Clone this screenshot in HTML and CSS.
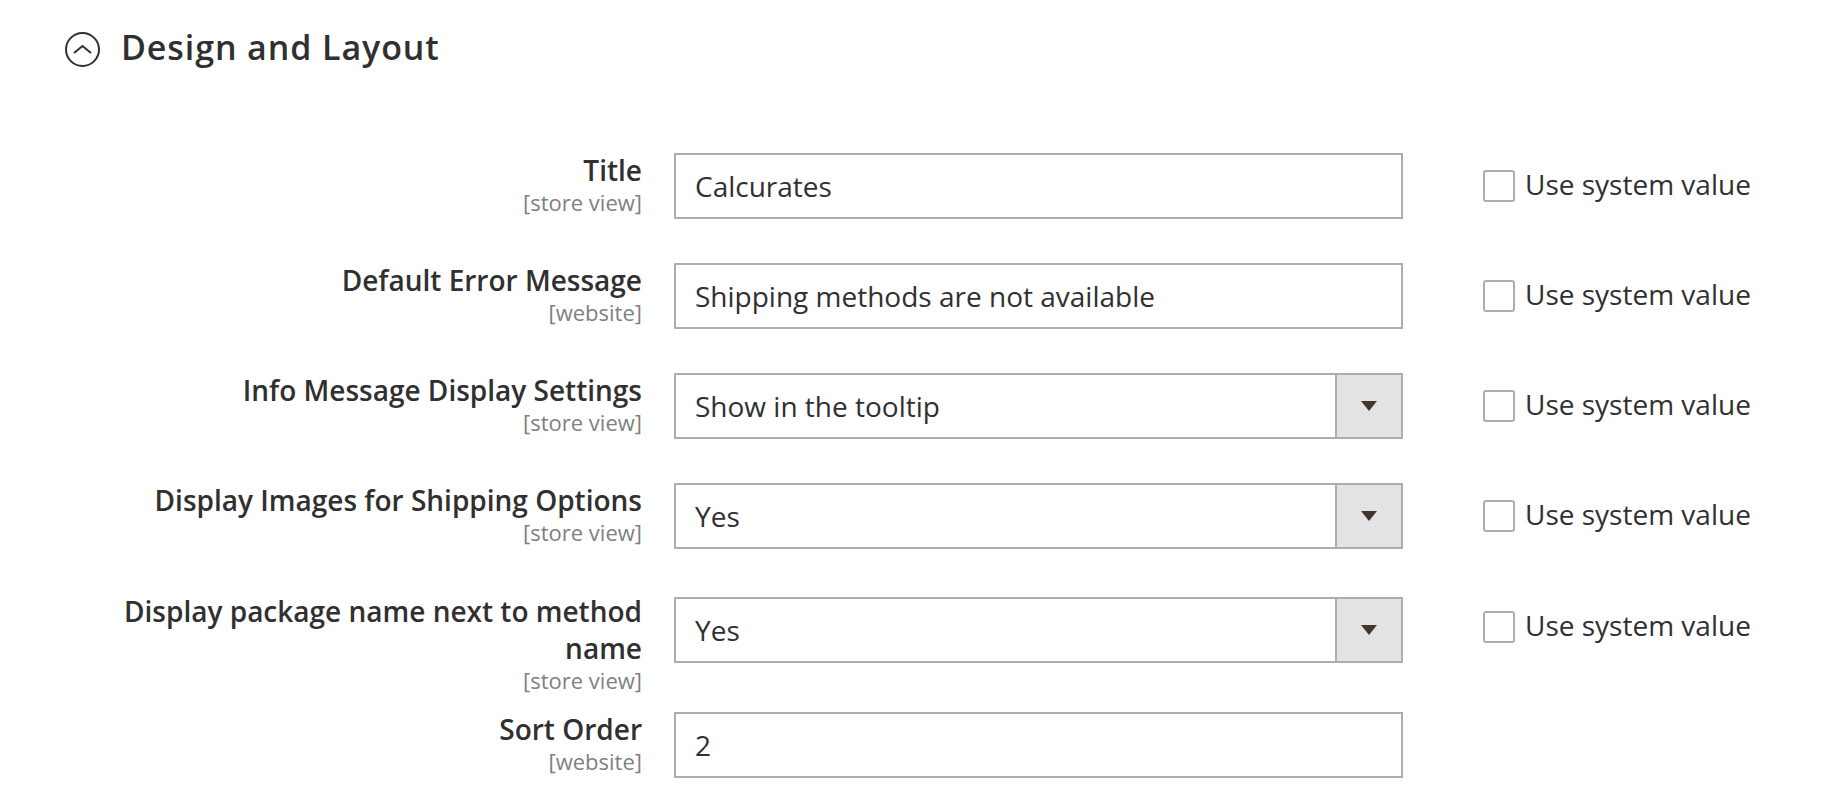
FILE: index.html
```html
<!DOCTYPE html>
<html lang="en">
<head>
    <meta charset="UTF-8">
    <meta name="viewport" content="width=device-width, initial-scale=1.0">
    <title>Design and Layout</title>
    <link rel="stylesheet" href="styles.css">
</head>
<body>
    <div class="section">
        <div class="section-title">
            <span class="toggle">
                <svg width="35" height="35" viewBox="0 0 35 35">
                    <circle cx="17.5" cy="17.5" r="16.5" fill="none" stroke="#303030" stroke-width="2"/>
                    <path d="M9 21 L17.5 14 L26 21" fill="none" stroke="#303030" stroke-width="2"/>
                </svg>
            </span>
            <h2>Design and Layout</h2>
        </div>

        <div class="form">
            <div class="field">
                <label class="label" for="title">Title<span class="scope">[store view]</span></label>
                <input class="input" type="text" id="title" value="Calcurates">
                <label class="system"><span class="checkbox"></span>Use system value</label>
            </div>

            <div class="field">
                <label class="label" for="error">Default Error Message<span class="scope">[website]</span></label>
                <input class="input" type="text" id="error" value="Shipping methods are not available">
                <label class="system"><span class="checkbox"></span>Use system value</label>
            </div>

            <div class="field">
                <label class="label" for="info">Info Message Display Settings<span class="scope">[store view]</span></label>
                <div class="select">
                    <span class="select-value" id="info">Show in the tooltip</span>
                    <span class="select-arrow"></span>
                </div>
                <label class="system"><span class="checkbox"></span>Use system value</label>
            </div>

            <div class="field">
                <label class="label" for="images">Display Images for Shipping Options<span class="scope">[store view]</span></label>
                <div class="select">
                    <span class="select-value" id="images">Yes</span>
                    <span class="select-arrow"></span>
                </div>
                <label class="system"><span class="checkbox"></span>Use system value</label>
            </div>

            <div class="field field-tall">
                <label class="label" for="package">Display package name next to method name<span class="scope">[store view]</span></label>
                <div class="select">
                    <span class="select-value" id="package">Yes</span>
                    <span class="select-arrow"></span>
                </div>
                <label class="system"><span class="checkbox"></span>Use system value</label>
            </div>

            <div class="field">
                <label class="label" for="sort">Sort Order<span class="scope">[website]</span></label>
                <input class="input" type="text" id="sort" value="2">
            </div>
        </div>
    </div>
</body>
</html>
```

FILE: styles.css
```css
body {
    margin: 0;
    font-family: "Open Sans", sans-serif;
    color: #303030;
    background: #fff;
}
.section {
    padding: 32px 0 0 65px;
}
.section-title {
    display: flex;
    align-items: center;
    height: 35px;
}
.toggle {
    display: flex;
    width: 35px;
    height: 35px;
}
.section-title h2 {
    margin: 0 0 6px 21px;
    font-size: 34px;
    font-weight: 600;
    line-height: 40px;
    letter-spacing: 0.9px;
    color: #303030;
}
.form {
    margin-top: 86px;
    padding-left: 47px;
}
.field {
    display: grid;
    grid-template-columns: 530px 729px auto;
    column-gap: 32px;
    height: 66px;
    margin-bottom: 44px;
}
.field-tall {
    padding-top: 4px;
    margin-bottom: 49px;
}
.label {
    margin-top: -1px;
    font-size: 28px;
    font-weight: 600;
    line-height: 37px;
    text-align: right;
}
.field-tall .label {
    margin-top: -4px;
}
.scope {
    display: block;
    font-size: 22px;
    font-weight: 400;
    line-height: 26px;
    color: #808080;
}
.input {
    box-sizing: border-box;
    height: 66px;
    width: 100%;
    margin: 0;
    padding: 0 19px;
    border: 2px solid #adadad;
    border-radius: 0;
    font-family: "Open Sans", sans-serif;
    font-size: 28px;
    color: #303030;
    background: #fff;
    outline: none;
}
.select {
    display: flex;
    height: 66px;
}
.select-value {
    flex: 1;
    display: flex;
    align-items: center;
    padding: 0 19px;
    border: 2px solid #adadad;
    border-right: none;
    font-size: 28px;
}
.select-arrow {
    display: flex;
    align-items: center;
    justify-content: center;
    width: 64px;
    border: 2px solid #adadad;
    background: #e3e3e3;
}
.select-arrow::before {
    content: "";
    border-left: 8px solid transparent;
    border-right: 8px solid transparent;
    border-top: 10px solid #41362f;
}
.system {
    display: flex;
    align-items: center;
    box-sizing: border-box;
    height: 66px;
    padding-bottom: 4px;
    margin-left: 48px;
    font-size: 28px;
    color: #303030;
    white-space: nowrap;
}
.field-tall .system {
    margin-top: -3px;
}
.checkbox {
    box-sizing: border-box;
    width: 32px;
    height: 32px;
    margin: 4px 10px 0 0;
    border: 2px solid #adadad;
    border-radius: 3px;
    background: #fff;
}
```
